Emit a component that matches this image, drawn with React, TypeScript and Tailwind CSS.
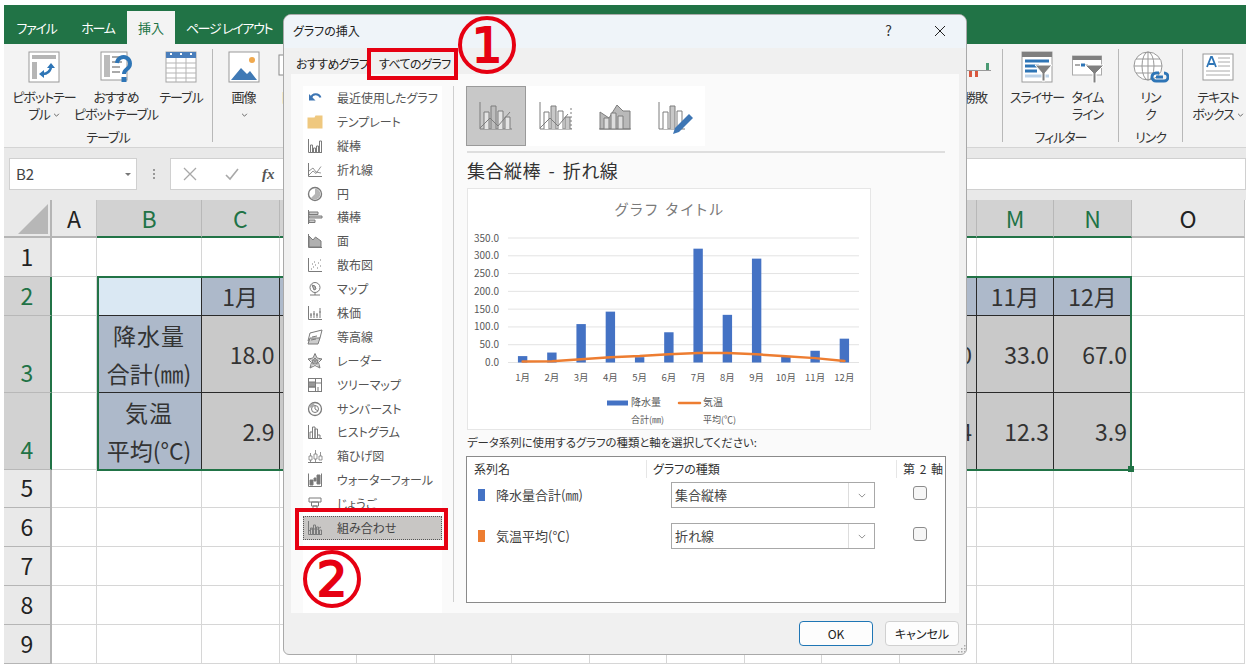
import { ReactNode } from "react";

const months = ["1月", "2月", "3月", "4月", "5月", "6月", "7月", "8月", "9月", "10月", "11月", "12月"];
const rain = [18, 28, 108, 143, 15, 85, 320, 134, 292, 18, 33, 67];
const temp = [2.9, 3.4, 9, 15, 18, 23, 27, 27, 23, 17.4, 12.3, 3.9];
const columns = ["A", "B", "C", "D", "E", "F", "G", "H", "I", "J", "K", "L", "M", "N", "O"];

const G = "#7b7b7b";

function Small({ children }: { children: ReactNode }) {
    return (
        <svg viewBox="0 0 16 16" className="h-4 w-4 shrink-0" fill="none" stroke={G} strokeWidth="1">
            {children}
        </svg>
    );
}

const Axis = () => <path d="M1.5 1v13.5H15" />;

const listItems: { label: string; icon: ReactNode }[] = [
    { label: "最近使用したグラフ", icon: <><path d="M4 8a5 5 0 0 1 9.5-.5" stroke="#3e76b4" strokeWidth="2" /><path d="M2 4v6.5h6.5z" fill="#3e76b4" stroke="none" /></> },
    { label: "テンプレート", icon: <path d="M0.5 3.5h7l1-2h7v13H0.5z" fill="#efc87f" stroke="none" /> },
    { label: "縦棒", icon: <><Axis /><path d="M3.5 14V7h2v7M6.5 14v-4h2v4M9.5 14V8h2v6M12.5 14V3h2v11" /></> },
    { label: "折れ線", icon: <><Axis /><path d="M2 13l4-4 3 2.500 5-7M2 9l4-3 3 4 5 1" strokeWidth="0.8" /></> },
    { label: "円", icon: <><circle cx="8" cy="8" r="6.5" strokeWidth="1.4" /><path d="M8 8V2.500a5.500 5.500 0 1 1-4 9.500z" fill="#b5b5b5" stroke="none" /></> },
    { label: "横棒", icon: <><path d="M1.500 1v14" /><path d="M2 3h9v2.500H2zM2 7h13v2H2zM2 11h6v2.500H2z" fill="#ccc" /></> },
    { label: "面", icon: <><Axis /><path d="M2 3l4 4 2.500-3L14 8v6H2z" fill="#b0b0b0" /></> },
    { label: "散布図", icon: <><path d="M1.500 1v13.500H15" /><path d="M4 12h1M6 10h1M8 8h1M10 11h1M11 6h1M7 5h1M13 3h1M13 9h1M5 7h1" /></> },
    { label: "マップ", icon: <><circle cx="8" cy="6.500" r="5" /><path d="M5 4l3 1 1 3-2 1zM3 14h10M8 11.500V14" fill="#b5b5b5" /></> },
    { label: "株価", icon: <><Axis /><path d="M4 13V8M7 13V6M10 13V8M13 13V3M3 10h2M6 9h2M9 10h2M12 7h2" /></> },
    { label: "等高線", icon: <><path d="M1 12l2-8 12-3-2 8z" /><path d="M1 15l2-6h10l-2 6z" fill="#ccc" /><path d="M5 8l5-1M4 11l5-1" /></> },
    { label: "レーダー", icon: <><path d="M8 0.500l2 4.500 5 1-3.500 3.500L13 15l-5-2.500L3 15l1.500-5.500L1 6l5-1z" /><path d="M8 5l3 2.500-1 3.500H6L5 7.500z" fill="#bbb" /><path d="M8 1v7l6.500-2M8 8l4 6M8 8l-4 6M8 8L1.500 6" strokeWidth="0.6" /></> },
    { label: "ツリーマップ", icon: <><rect x="1.500" y="1.500" width="13" height="13" /><rect x="1.500" y="5" width="7" height="5" fill="#999" /><path d="M8.500 1.500v13M8.500 6h6M1.500 10h7M11 10v4.500" /></> },
    { label: "サンバースト", icon: <><circle cx="8" cy="8" r="6.500" strokeWidth="1.300" /><circle cx="8" cy="8" r="3.500" /><path d="M8 4.500V8l3 2" /><path d="M2 6a6.500 6.500 0 0 1 5-4l.500 2.500A4 4 0 0 0 4.500 7z" fill="#aaa" stroke="none" /></> },
    { label: "ヒストグラム", icon: <><path d="M1.500 1v13.500H15" /><path d="M3 14V8h2.500v6M5.500 14V3H8v11M8 14V5h2.500v9M10.500 14v-3H13v3" /></> },
    { label: "箱ひげ図", icon: <><path d="M1 14.500h14" /><path d="M2 8h3v4H2zM7 6h3v5H7zM12 8h3v4h-3zM3.500 5v3M8.500 2v4M13.500 4v4M3.500 12v2M8.500 11v3" strokeWidth="0.8" /></> },
    { label: "ウォーターフォール", icon: <><path d="M1.500 1.500v13h13V1.500" /><path d="M3 8h3v5H3zM7 6h2v3H7zM10 3h3v9h-3z" fill="#777" /></> },
    { label: "じょうご", icon: <path d="M2 2h12v4H2zM4.500 6h7v4h-7zM6 10h4v5H6z" /> },
];

function SeriesRow({ color, label, value }: { color: string; label: string; value: string }) {
    return (
        <div className="grid h-[26px] grid-cols-[204px_204px_1fr] items-center">
            <div className="flex items-center pl-[11px] text-[13px] text-[#444]">
                <span className="h-3 w-[7px]" style={{ backgroundColor: color }} />
                <span className="ml-[11px]">{label}</span>
            </div>
            <div className="flex h-[26px] items-center border border-[#a8a8a8] bg-white text-[13px] text-[#444]">
                <span className="flex-1 pl-[3px]">{value}</span>
                <span className="flex h-full w-[26px] items-center justify-center border-l border-[#ddd]">
                    <svg viewBox="0 0 10 6" className="h-[5px] w-2" fill="none" stroke="#777"><path d="M1 1l4 4 4-4" /></svg>
                </span>
            </div>
            <span className="ml-[38px] -mt-[4px] h-[14px] w-[14px] rounded-[3px] border border-[#8c8c8c] bg-[#f6f6f6]" />
        </div>
    );
}

function ComboChart() {
    const x0 = 40;
    const step = 29.25;
    const y0 = 173.5;
    const scale = 124.5 / 350;
    const ticks = [350, 300, 250, 200, 150, 100, 50, 0];
    const line = temp.map((t, i) => `${x0 + step * i + step / 2},${y0 - t * scale}`).join(" ");
    return (
        <svg viewBox="0 0 404 242" className="h-[242px] w-[404px]">
            <text x="202" y="26" textAnchor="middle" fontSize="14.500" fill="#7a7a7a" letterSpacing="2.500">グラフ タイトル</text>
            {ticks.map((t) => {
                const y = y0 - t * scale;
                return (
                    <g key={t}>
                        <line x1={x0} x2="391" y1={y} y2={y} stroke="#e3e3e3" strokeWidth="1" />
                        <text x="31" y={y + 3.500} textAnchor="end" fontSize="10" fill="#595959">{t}.0</text>
                    </g>
                );
            })}
            {rain.map((r, i) => (
                <rect key={i} x={x0 + step * i + step / 2 - 4.700} y={y0 - r * scale} width="9.400" height={r * scale} fill="#4472c4" />
            ))}
            <polyline points={line} fill="none" stroke="#ed7d31" strokeWidth="2.500" strokeLinecap="round" strokeLinejoin="round" />
            {months.map((m, i) => (
                <text key={m} x={x0 + step * i + step / 2} y="192" textAnchor="middle" fontSize="9.500" fill="#595959">{m}</text>
            ))}
            <rect x="139" y="211.500" width="21" height="5" fill="#4472c4" />
            <text x="163" y="217" fontSize="10" fill="#595959">降水量</text>
            <text x="163" y="233.500" fontSize="9" fill="#595959">合計(㎜)</text>
            <line x1="211" x2="232" y1="214" y2="214" stroke="#ed7d31" strokeWidth="2.500" strokeLinecap="round" />
            <text x="235" y="217" fontSize="10" fill="#595959">気温</text>
            <text x="235" y="233.500" fontSize="9" fill="#595959">平均(℃)</text>
        </svg>
    );
}

function ChartTile({ selected, children }: { selected?: boolean; children: ReactNode }) {
    return (
        <div className={selected ? "flex h-[60px] w-[60px] items-center justify-center border border-[#9a9a9a] bg-[#c8c8c8]" : "flex h-[60px] w-[60px] items-center justify-center"}>
            <svg viewBox="0 0 36 36" className="h-9 w-9" fill="none" stroke="#7d7d7d" strokeWidth="1">
                {children}
            </svg>
        </div>
    );
}

function InsertChartDialog() {
    return (
        <div className="absolute left-[283px] top-[14px] flex h-[641px] w-[684px] flex-col overflow-hidden rounded-t-[8px] rounded-b-[6px] border border-[#a9a9a9] bg-[#f0f0f0]">
            <div className="flex h-[33px] shrink-0 items-center bg-[#eff4f9] pb-[2px] pl-[9px] text-[12px] text-[#222]">
                <span className="flex-1">グラフの挿入</span>
                <span className="mr-[42px] text-[14px] text-[#333]">?</span>
                <svg viewBox="0 0 12 12" className="mr-5 h-3 w-3" fill="none" stroke="#222"><path d="M1 1l10 10M11 1L1 11" /></svg>
            </div>
            <div className="flex h-[26px] shrink-0 items-end whitespace-nowrap pl-[12px] text-[12px] tracking-[-0.6px] text-[#222]">
                <span className="w-[72px] pb-[1px]">おすすめグラフ</span>
                <span className="w-[89px] pb-[1px] pl-[11px]">すべてのグラフ</span>
            </div>
            <div className="mx-[7px] flex h-[539px] shrink-0 bg-[#fafafa] pt-[12px]">
                <div className="ml-[12px] w-[139px] bg-white">
                    {listItems.map((item) => (
                        <div key={item.label} className="flex h-[23.900px] items-center gap-[14px] pl-[4px] text-[12px] text-[#555]">
                            <Small>{item.icon}</Small>
                            <span className="whitespace-nowrap">{item.label}</span>
                        </div>
                    ))}
                    <div className="flex h-[24px] items-center gap-[14px] border border-dotted border-[#555] bg-[#c8c6c4] pl-[3px] text-[12px] text-[#444]">
                        <Small><Axis /><path d="M3.500 14V8h2v6M6.500 14V5h2v9M9.500 14V7h2v7M12.500 14v-4h2v4M2 11l4-3 3 2 5-3" /></Small>
                        <span>組み合わせ</span>
                    </div>
                </div>
                <div className="ml-[11px] h-[516px] w-px bg-[#cfcfcf]" />
                <div className="ml-[12px] w-[480px]">
                    <div className="flex h-[60px] w-[239px] bg-white">
                        <ChartTile selected>
                            <path d="M2 4v27h32" />
                            <path d="M6 31V14h5v17M20 31V13h5v18M27 31V19h5v12" fill="#e4e4e4" />
                            <path d="M13 31V8h5v23" fill="#bdbdbd" />
                            <path d="M2 30l10-10 8 8 12-14" />
                        </ChartTile>
                        <ChartTile>
                            <path d="M2 4v27h32" />
                            <path d="M6 31V14h5v17M20 31V13h5v18" fill="#fff" />
                            <path d="M13 31V8h5v23M27 31V19h5v12" fill="#c8c8c8" />
                            <path d="M33 10v21" strokeDasharray="2 2" />
                            <path d="M2 30l10-10 8 8 10-12" />
                        </ChartTile>
                        <ChartTile>
                            <path d="M3 31V14l9 6 8-13 6 6h7v18z" fill="#b9b9b9" />
                            <path d="M7 31V20h5v11M14 31V15h5v16M21 31V18h5v13" fill="#ddd" />
                            <path d="M2 31h32" />
                        </ChartTile>
                        <ChartTile>
                            <path d="M2 4v27h26" />
                            <path d="M6 31V14h5v17M20 31V13h5v18" fill="#fff" />
                            <path d="M13 31V8h5v23" fill="#c8c8c8" />
                            <path d="M16 36l2-6 14-14 4 4-14 14z" fill="#3e76b4" stroke="none" />
                        </ChartTile>
                    </div>
                    <div className="ml-px mt-[5px] h-[2px] w-[478px] bg-[#dedede]" />
                    <div className="ml-px flex h-[35px] items-center pb-[2px] text-[18px] leading-none tracking-[0.5px] text-[#333] [word-spacing:3px]">集合縦棒 - 折れ線</div>
                    <div className="ml-px h-[242px] w-[404px] border border-[#e6e6e6] bg-white">
                        <ComboChart />
                    </div>
                    <div className="ml-px flex h-[26px] items-center text-[11.400px] text-[#333]">データ系列に使用するグラフの種類と軸を選択してください:</div>
                    <div className="h-[147px] w-[480px] border border-[#8a8a8a] bg-white">
                        <div className="grid h-[23px] grid-cols-[179px_250px_1fr] items-center text-[12px] text-[#333]">
                            <span className="pl-[7px]">系列名</span>
                            <span className="border-l border-[#e6e6e6] pl-[6px]">グラフの種類</span>
                            <span className="whitespace-nowrap border-l border-[#e6e6e6] pl-[6px] [word-spacing:2px]">第 2 軸</span>
                        </div>
                        <div className="mt-[2px] flex flex-col gap-[15px]">
                            <SeriesRow color="#4472c4" label="降水量合計(㎜)" value="集合縦棒" />
                            <SeriesRow color="#ed7d31" label="気温平均(℃)" value="折れ線" />
                        </div>
                    </div>
                </div>
            </div>
            <div className="flex flex-1 justify-end gap-3 pr-[7px] pt-2 text-[12px] text-[#222]">
                <button className="h-[25px] w-[74px] rounded-[4px] border border-[#1f76b5] bg-[#fdfdfd]">OK</button>
                <button className="h-[25px] w-[74px] rounded-[4px] border border-[#d0d0d0] bg-[#fdfdfd]">キャンセル</button>
            </div>
            <svg viewBox="0 0 10 10" className="absolute bottom-0 right-0 h-[10px] w-[10px]" fill="#aaa">
                <path d="M8 1h1.500v1.500H8zM5 4h1.500v1.500H5zM8 4h1.500v1.500H8zM2 7h1.500v1.500H2zM5 7h1.500v1.500H5zM8 7h1.500v1.500H8z" />
            </svg>
        </div>
    );
}

function RibbonButton({ width, icon, label }: { width: string; icon: ReactNode; label: ReactNode }) {
    return (
        <div className={`${width} flex shrink-0 flex-col items-center`}>
            <div className="flex h-[34px] items-center justify-center">{icon}</div>
            <div className="mt-[4px] whitespace-nowrap text-center text-[13px] leading-[17px] tracking-[-1px] text-[#333]">{label}</div>
        </div>
    );
}

const RibbonSeparator = () => <div className="mt-[5px] h-[93px] w-px shrink-0 bg-[#b8b8b8]" />;

function Chevron() {
    return (
        <svg viewBox="0 0 8 5" className="ml-[3px] inline h-[4px] w-[7px] align-middle" fill="none" stroke="#444"><path d="M1 1l3 3 3-3" /></svg>
    );
}

function RibbonIcon({ children, className }: { children: ReactNode; className?: string }) {
    return (
        <svg viewBox="0 0 32 32" className={className ?? "h-8 w-8"} fill="none">
            {children}
        </svg>
    );
}

function GroupLabel({ text }: { text: string }) {
    return <div className="text-center text-[13px] leading-[15px] tracking-[-1px] text-[#333]">{text}</div>;
}

function Ribbon() {
    return (
        <div className="flex h-[103px] bg-[#f3f3f3] pt-0">
            <div className="flex w-[208px] shrink-0 flex-col">
                <div className="flex h-[85px] pt-[6px]">
                    <RibbonButton
                        width="w-[80px]"
                        icon={
                            <RibbonIcon>
                                <rect x="1" y="1" width="30" height="30" fill="#fff" stroke="#999" />
                                <rect x="4" y="4" width="24" height="4" fill="#b5b5b5" />
                                <rect x="4" y="11" width="5" height="17" fill="#b5b5b5" />
                                <path d="M14 23a8 8 0 0 0 9-8" stroke="#2e75b6" strokeWidth="2.500" />
                                <path d="M19 17l4-5 4 5zM16 19v8l-5-4z" fill="#2e75b6" />
                            </RibbonIcon>
                        }
                        label={<>ピボットテー<br />ブル<Chevron /></>}
                    />
                    <RibbonButton
                        width="w-[64px]"
                        icon={
                            <RibbonIcon>
                                <rect x="1" y="1" width="26" height="28" fill="#fff" stroke="#999" />
                                <rect x="4" y="4" width="6" height="22" fill="#bbb" />
                                <path d="M12 6h12M12 11h10M12 16h8M12 21h8" stroke="#aaa" strokeWidth="2" />
                                <path d="M17 12a6.500 6.500 0 1 1 10 6c-2 1.500-3 2.500-3 5" stroke="#2e75b6" strokeWidth="4" />
                                <rect x="21.500" y="26" width="5" height="5" fill="#2e75b6" />
                            </RibbonIcon>
                        }
                        label={<>おすすめ<br />ピボットテーブル</>}
                    />
                    <RibbonButton
                        width="w-[66px]"
                        icon={
                            <RibbonIcon>
                                <rect x="1" y="1" width="30" height="30" fill="#fff" stroke="#a5a5a5" />
                                <rect x="1" y="1" width="30" height="6" fill="#4a7ebb" />
                                <path d="M6 2v2M16 2v2M26 2v2" stroke="#fff" strokeWidth="2" />
                                <path d="M1 12h30M1 17h30M1 22h30M1 27h30M11 7v24M21 7v24" stroke="#b5b5b5" />
                            </RibbonIcon>
                        }
                        label="テーブル"
                    />
                </div>
                <GroupLabel text="テーブル" />
            </div>
            <RibbonSeparator />
            <div className="flex pt-[6px]">
                <RibbonButton
                    width="w-[61px]"
                    icon={
                        <RibbonIcon>
                            <rect x="1" y="1" width="30" height="30" fill="#fff" stroke="#999" />
                            <path d="M3 29l10-12 6 6 3-3 7 9z" fill="#3f79b5" />
                            <circle cx="24" cy="9" r="3" fill="#f0a94e" />
                        </RibbonIcon>
                    }
                    label={<>画像<br /><Chevron /></>}
                />
                <RibbonButton
                    width="w-[40px]"
                    icon={<RibbonIcon><rect x="1" y="4" width="24" height="20" fill="#fff" stroke="#8a8a8a" /></RibbonIcon>}
                    label="図形"
                />
            </div>
            <div className="flex-1" />
            <div className="flex w-[50px] shrink-0 justify-center pt-[6px]">
                <RibbonButton
                    width="w-[50px]"
                    icon={
                        <RibbonIcon>
                            <path d="M0 19.500h32" stroke="#999" />
                            <path d="M10 20h3v6h-3zM16 20h3v6h-3z" fill="#d9573e" />
                            <path d="M27 12h3v7h-3z" fill="#4a9a73" />
                            <path d="M2 13h3v6H2z" fill="#4a9a73" />
                        </RibbonIcon>
                    }
                    label="勝敗"
                />
            </div>
            <div className="w-[2px]" />
            <RibbonSeparator />
            <div className="flex w-[115px] shrink-0 flex-col">
                <div className="flex h-[85px] pl-[9px] pt-[6px]">
                    <RibbonButton
                        width="w-[50px]"
                        icon={
                            <RibbonIcon>
                                <rect x="1" y="1" width="30" height="30" fill="#fff" stroke="#9c9c9c" />
                                <rect x="1" y="1" width="30" height="5" fill="#7f7f7f" />
                                <path d="M4 10h24M4 15h14M4 20h12" stroke="#2e75b6" strokeWidth="3" />
                                <path d="M4 25h24" stroke="#bcd2e8" strokeWidth="3" />
                                <path d="M14 14h17l-7 8v8h-3v-8z" fill="#808080" stroke="#fff" />
                            </RibbonIcon>
                        }
                        label="スライサー"
                    />
                    <RibbonButton
                        width="w-[51px]"
                        icon={
                            <RibbonIcon className="h-8 w-[34px]">
                                <rect x="0.500" y="5" width="29" height="19" fill="#fff" stroke="#aaa" />
                                <rect x="0.500" y="5" width="29" height="4" fill="#7f7f7f" />
                                <path d="M3 14h5M11 14h5" stroke="#aaa" strokeWidth="2" />
                                <path d="M9 14h4" stroke="#2e75b6" strokeWidth="3" />
                                <path d="M13 14h19l-8 8v10h-3V22z" fill="#808080" stroke="#fff" />
                            </RibbonIcon>
                        }
                        label={<>タイム<br />ライン</>}
                    />
                </div>
                <GroupLabel text="フィルター" />
            </div>
            <RibbonSeparator />
            <div className="flex w-[63px] shrink-0 flex-col">
                <div className="flex h-[85px] justify-center pt-[6px]">
                    <RibbonButton
                        width="w-[63px]"
                        icon={
                            <svg viewBox="0 0 36 32" className="h-8 w-9" fill="none">
                                <circle cx="15" cy="15" r="14" stroke="#999" fill="#fff" />
                                <ellipse cx="15" cy="15" rx="6" ry="14" stroke="#999" />
                                <path d="M1 15h28M3 8h24M3 22h24M15 1v28" stroke="#999" />
                                <path d="M19 26a4 4 0 0 1 4-4h3M31 22a4 4 0 0 1 0 8h-5" stroke="#2e75b6" strokeWidth="3" />
                                <path d="M23 26h7M19 26a4 4 0 0 0 4 4h3" stroke="#2e75b6" strokeWidth="3" />
                            </svg>
                        }
                        label={<>リン<br />ク</>}
                    />
                </div>
                <GroupLabel text="リンク" />
            </div>
            <RibbonSeparator />
            <div className="-mr-[2px] flex pl-[5px] pt-[6px]">
                <RibbonButton
                    width="w-[60px]"
                    icon={
                        <RibbonIcon>
                            <rect x="1" y="3" width="30" height="26" fill="#fff" stroke="#999" />
                            <path d="M5 16l4-10h1l4 10M7 13h5" stroke="#2e75b6" strokeWidth="1.800" />
                            <path d="M16 7h12M16 11h12M16 15h12M4 20h24M4 24h24" stroke="#aaa" />
                        </RibbonIcon>
                    }
                    label={<>テキスト<br />ボックス<Chevron /></>}
                />
            </div>
        </div>
    );
}

function FormulaBar() {
    return (
        <div className="flex h-[53px] items-start border-t border-[#d4d4d4] bg-[#e9e9e9] pt-[10px]">
            <div className="ml-[5px] flex h-8 w-[128px] items-center border border-[#d0d0d0] bg-white pl-[6px] text-[15px] text-[#444]">
                <span className="flex-1">B2</span>
                <span className="mr-[5px] h-0 w-0 border-x-[3px] border-t-[3px] border-x-transparent border-t-[#777]" />
            </div>
            <div className="flex h-8 w-[33px] flex-col items-center justify-center gap-[2px]">
                <span className="h-[2px] w-[2px] bg-[#999]" />
                <span className="h-[2px] w-[2px] bg-[#999]" />
                <span className="h-[2px] w-[2px] bg-[#999]" />
            </div>
            <div className="flex h-8 flex-1 items-center border border-[#d0d0d0] bg-white pl-[12px]">
                <svg viewBox="0 0 14 14" className="h-[14px] w-[14px]" fill="none" stroke="#a8a8a8" strokeWidth="1.300"><path d="M1 1l12 12M13 1L1 13" /></svg>
                <svg viewBox="0 0 14 14" className="ml-[28px] h-[14px] w-[14px]" fill="none" stroke="#a8a8a8" strokeWidth="1.600"><path d="M1 8l4 4 8-10" /></svg>
                <span className="ml-[23px] text-[15px] font-bold italic text-[#555] [font-family:'Liberation_Serif',serif]">fx</span>
            </div>
        </div>
    );
}

function Sheet() {
    const heights = [39, 39, 77, 77, 38, 39, 39, 39, 39];
    const rows = heights.map((_, i) => i + 1);
    return (
        <div className="relative grid grid-cols-[48px_45px_105px_repeat(10,77.5px)_77px_78px_113px] grid-rows-[38px_39px_39px_77px_77px_38px_39px_39px_39px_39px] text-[23px]">
            <div className="flex items-end justify-end border-b-2 border-r-2 border-[#b5b5b5] bg-[#e9e9e9] pb-[2px] pr-[2px]">
                <div className="h-0 w-0 border-b-[30px] border-l-[30px] border-b-[#b7b7b7] border-l-transparent" />
            </div>
            {columns.map((c, i) => {
                const selected = c !== "A" && c !== "O";
                // D to L sit behind the dialog, so their letters are left out
                const behindDialog = i >= 3 && i <= 11;
                return (
                    <div
                        key={c}
                        className={
                            selected
                                ? "flex items-center justify-center border-b-2 border-r border-b-[#217346] border-r-[#b8b8b8] bg-[#d2d2d2] text-[#217346]"
                                : "flex items-center justify-center border-b-2 border-r border-b-[#b5b5b5] border-r-[#c4c4c4] bg-[#e9e9e9] text-[#222]"
                        }
                    >
                        {behindDialog ? "" : c}
                    </div>
                );
            })}
            {rows.map((r) => {
                const selected = r >= 2 && r <= 4;
                return [
                    <div
                        key={`h${r}`}
                        className={
                            selected
                                ? "flex items-end justify-center border-b border-r-2 border-b-[#b8b8b8] border-r-[#217346] bg-[#d2d2d2] pb-[3px] text-[#217346]"
                                : "flex items-end justify-center border-b border-r-2 border-b-[#b5b5b5] border-r-[#b5b5b5] bg-[#e9e9e9] pb-[3px] text-[#222]"
                        }
                    >
                        {r}
                    </div>,
                    ...columns.map((c, i) => <SheetCell key={`${c}${r}`} col={i} row={r} />),
                ];
            })}
            <div className="absolute left-[93px] top-[76px] h-[195px] w-[1035px] border-2 border-[#217346]" />
            <div className="absolute left-[1124px] top-[266px] h-[6px] w-[6px] bg-[#217346]" />
        </div>
    );
}

function SheetCell({ col, row }: { col: number; row: number }) {
    const inTable = col >= 1 && col <= 13 && row >= 2 && row <= 4;
    if (!inTable) return <div className="border-b border-r border-[#d6d6d6] bg-white" />;
    const edge = "border-b border-r border-[#2a2a2a]";
    // columns D to K sit behind the dialog, so their text is left out
    const hidden = col >= 3 && col <= 10;
    if (col === 1 && row === 2) return <div className={`${edge} bg-[#dae8f3]`} />;
    if (row === 2) {
        const label = hidden || col === 11 ? "" : months[col - 2];
        return <div className={`${edge} flex items-center justify-center bg-[#adb9ca] text-[#333]`}>{label}</div>;
    }
    if (col === 1) {
        return (
            <div className={`${edge} flex flex-col items-center justify-center bg-[#adb9ca] leading-[38px] text-[#333]`}>
                <span className="tracking-[1px]">{row === 3 ? "降水量" : "気温"}</span>
                <span className="whitespace-nowrap">{row === 3 ? "合計(㎜)" : "平均(°C)"}</span>
            </div>
        );
    }
    const value = (row === 3 ? rain : temp)[col - 2];
    return (
        <div className={`${edge} flex items-center justify-end bg-[#c9c9c9] pr-[4px] text-[#333]`}>{hidden ? "" : value.toFixed(1)}</div>
    );
}

function Annotations() {
    const ring = "flex items-center justify-center rounded-full border-[4px] border-[#e60012] text-[48px] leading-none text-[#e60012] [-webkit-text-stroke:2px_#e60012] [font-family:'DejaVu_Sans',sans-serif]";
    return (
        <>
            <div className="absolute left-[367px] top-[48px] h-[32px] w-[91px] border-[4px] border-[#e60012]" />
            <div className="absolute left-[295px] top-[508px] h-[42px] w-[153px] border-[4px] border-[#e60012]" />
            <div className={`absolute left-[458px] top-[16px] h-[58px] w-[58px] ${ring}`}>1</div>
            <div className={`absolute left-[303px] top-[550px] h-[58px] w-[58px] ${ring}`}>2</div>
        </>
    );
}

export default function App() {
    const tabs = [
        { label: "ファイル", width: "w-[65px]", className: "tracking-[-1.3px]" },
        { label: "ホーム", width: "w-[58px]", className: "tracking-[-1.3px]" },
        { label: "挿入", width: "w-[48px]", active: true, className: "" },
        { label: "ページ レイアウト", width: "w-[108px]", className: "tracking-[-1.3px]" },
    ];
    return (
        <div className="relative h-[669px] w-[1251px] overflow-hidden bg-white pl-1 pr-[5px] pt-[5px] [font-family:'Noto_Sans_CJK_JP',sans-serif] [font-feature-settings:'palt']">
            <div className="flex h-[39px] items-end bg-[#217346]">
                {tabs.map((t) => (
                    <div
                        key={t.label}
                        className={
                            t.active
                                ? `${t.width} flex h-[33px] items-center justify-center bg-[#f3f3f3] text-[13px] text-[#217346]`
                                : `${t.width} ${t.className} flex h-[33px] items-center justify-center whitespace-nowrap text-[13px] text-white`
                        }
                    >
                        {t.label}
                    </div>
                ))}
            </div>
            <Ribbon />
            <FormulaBar />
            <Sheet />
            <InsertChartDialog />
            <Annotations />
        </div>
    );
}
